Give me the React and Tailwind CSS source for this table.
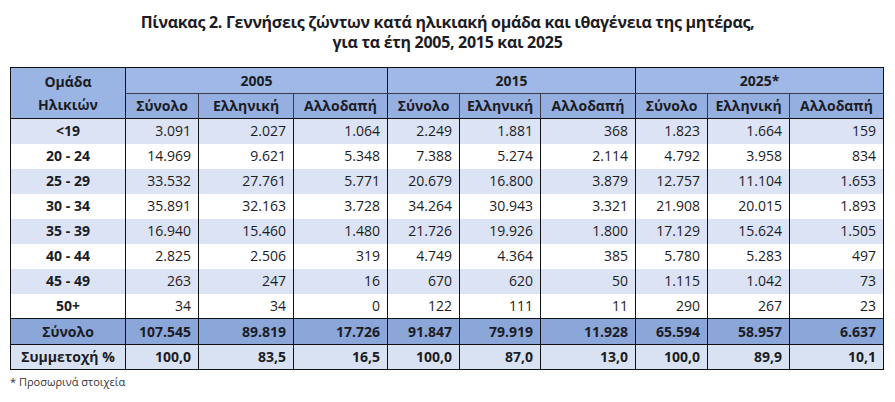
import React from "react";

// Births by mother's age group and nationality
const rows = [
  ["<19", "3.091", "2.027", "1.064", "2.249", "1.881", "368", "1.823", "1.664", "159"],
  ["20 - 24", "14.969", "9.621", "5.348", "7.388", "5.274", "2.114", "4.792", "3.958", "834"],
  ["25 - 29", "33.532", "27.761", "5.771", "20.679", "16.800", "3.879", "12.757", "11.104", "1.653"],
  ["30 - 34", "35.891", "32.163", "3.728", "34.264", "30.943", "3.321", "21.908", "20.015", "1.893"],
  ["35 - 39", "16.940", "15.460", "1.480", "21.726", "19.926", "1.800", "17.129", "15.624", "1.505"],
  ["40 - 44", "2.825", "2.506", "319", "4.749", "4.364", "385", "5.780", "5.283", "497"],
  ["45 - 49", "263", "247", "16", "670", "620", "50", "1.115", "1.042", "73"],
  ["50+", "34", "34", "0", "122", "111", "11", "290", "267", "23"],
];

const total = ["Σύνολο", "107.545", "89.819", "17.726", "91.847", "79.919", "11.928", "65.594", "58.957", "6.637"];
const share = ["Συμμετοχή %", "100,0", "83,5", "16,5", "100,0", "87,0", "13,0", "100,0", "89,9", "10,1"];

const widths = ["w-[115px]", "w-[73px]", "w-[95px]", "w-[94px]", "w-[72px]", "w-[81px]", "w-[95px]", "w-[72px]", "w-[82px]", "w-[94px]"];
const subs = ["Σύνολο", "Ελληνική", "Αλλοδαπή"];

const App = () => {
  return (
    <div className="w-[895px] h-[402px] bg-white text-[#1c1c24] font-['Open_Sans','Noto_Sans',sans-serif] overflow-hidden">
      {/* Title */}
      <div className="pt-[12px] text-center text-[16px] font-bold leading-[20px] tracking-[-0.3px]">
        <p>Πίνακας 2. Γεννήσεις ζώντων κατά ηλικιακή ομάδα και ιθαγένεια της μητέρας,</p>
        <p>για τα έτη 2005, 2015 και 2025</p>
      </div>

      {/* Table */}
      <table className="mt-[15px] ml-[10px] border-collapse border border-[#111] table-fixed text-[14px] leading-none">
        <colgroup>
          {widths.map((w, i) => (
            <col key={i} className={w} />
          ))}
        </colgroup>
        <thead className="font-bold">
          <tr className="h-[26px] bg-[#9fb8e6]">
            <th rowSpan={2} className="border border-[#111] bg-[#9ab4e4] font-bold leading-[23px] text-[14px]">
              Ομάδα
              <br />
              Ηλικιών
            </th>
            <th colSpan={3} className="border border-[#111] border-b-[#3a3a4a]">2005</th>
            <th colSpan={3} className="border border-[#111] border-b-[#3a3a4a]">2015</th>
            <th colSpan={3} className="border border-[#111] border-b-[#3a3a4a]">2025*</th>
          </tr>
          <tr className="h-[25px] bg-[#95afe1]">
            {[0, 1, 2].map((g) =>
              subs.map((s, i) => (
                <th
                  key={g + "-" + i}
                  className={`border-y border-[#111] ${i === 0 ? "border-l" : "border-l border-l-[#3a3a4a]"} ${i === 2 ? "border-r" : ""}`}
                >
                  {s}
                </th>
              ))
            )}
          </tr>
        </thead>
        <tbody>
          {rows.map((r, ri) => (
            <tr key={r[0]} className={`h-[25px] ${ri % 2 === 0 ? "bg-[#dbe3f4]" : "bg-white"}`}>
              {r.map((c, ci) => (
                <td
                  key={ci}
                  className={`border-x border-[#111] ${ci === 0 ? "text-center font-bold" : "text-right pr-[7px]"}`}
                >
                  {c}
                </td>
              ))}
            </tr>
          ))}
          <tr className="h-[26px] bg-[#8ba7da] font-bold">
            {total.map((c, ci) => (
              <td key={ci} className={`border border-[#111] ${ci === 0 ? "text-center" : "text-right pr-[7px]"}`}>
                {c}
              </td>
            ))}
          </tr>
          <tr className="h-[25px] bg-[#d9e2f3] font-bold">
            {share.map((c, ci) => (
              <td key={ci} className={`border border-[#111] ${ci === 0 ? "text-center" : "text-right pr-[7px]"}`}>
                {c}
              </td>
            ))}
          </tr>
        </tbody>
      </table>

      {/* Footnote */}
      <p className="mt-[4px] ml-[10px] text-[11px] text-[#333]">* Προσωρινά στοιχεία</p>
    </div>
  );
};

export default App;
